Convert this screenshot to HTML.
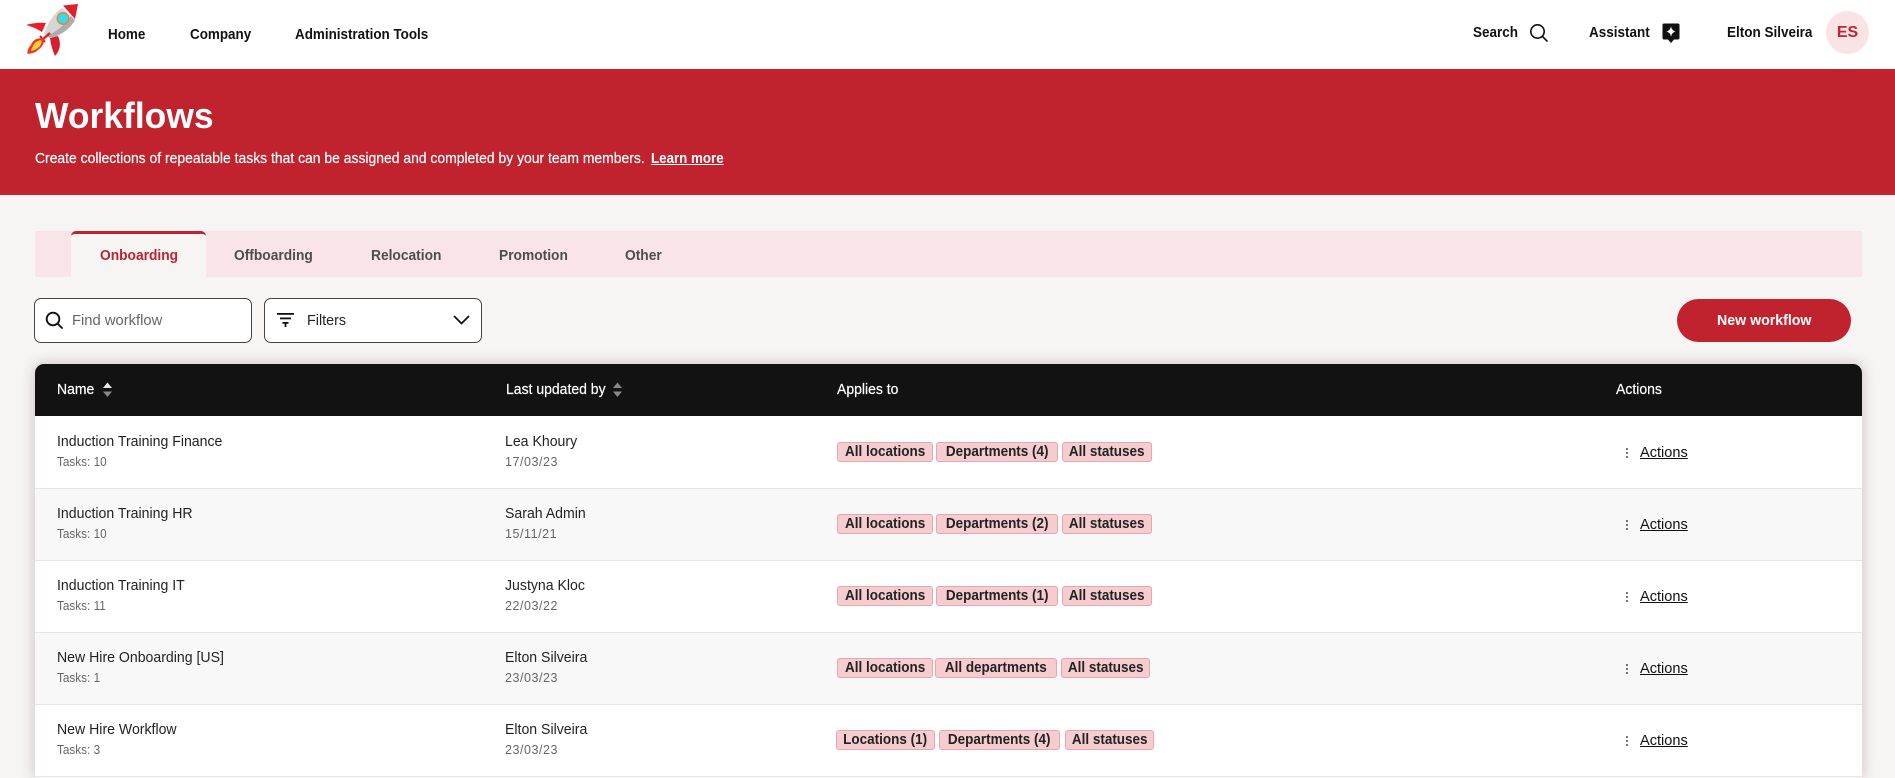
<!DOCTYPE html>
<html lang="en"><head><meta charset="utf-8"><title>Workflows</title>
<style>
*{box-sizing:border-box}
html,body{margin:0;padding:0;width:1895px;height:778px;overflow:hidden}
body{background:#f6f5f4;position:relative;font-family:"Liberation Sans",sans-serif;color:#111}
.a{position:absolute}
.t{position:absolute;white-space:nowrap;transform-origin:0 50%;line-height:20px;height:20px}
.nav{font-size:15px;font-weight:700;top:25px;transform:scaleX(.895);color:#111}
.tab{font-size:14.5px;font-weight:700;top:246px;color:#4d4d4d;transform:scaleX(.95)}
.hd{font-size:14.5px;top:380px;color:#fff;transform:scaleX(.965);-webkit-text-stroke:.2px #fff}
.row{position:absolute;left:35px;width:1827px;height:72px;background:#fff}
.row::after{content:"";position:absolute;left:0;right:0;top:72px;height:1px;background:#e5e5e5;z-index:1}
.row.alt{background:#f8f8f8}
.n{font-size:15px;top:16px;left:22px;color:#222;transform:scaleX(.94)}
.s{font-size:12.5px;top:36px;left:22px;color:#666;transform:scaleX(.94)}
.n.c,.s.c{left:470px}
.s.c{transform:none;letter-spacing:.55px}
.tag{position:absolute;top:26px;height:20px;background:#f5cdd1;border:1px solid #e9a6ab;border-radius:3px;text-align:center;font-size:14.5px;line-height:18px;color:#222;font-weight:700;overflow:hidden}
.tag span{display:inline-block;transform:scaleX(.93);transform-origin:50% 50%;white-space:nowrap;margin:0 -20px}
.act{font-size:15px;top:27px;left:1605px;color:#111;text-decoration:underline;transform:scaleX(.97)}
.dots{position:absolute;left:1591px;top:31px;width:2px;height:12px;background:radial-gradient(circle,#555 .85px,transparent 1.1px) 0 0/2px 4px repeat-y}
</style></head>
<body>
<header class="a" style="left:0;top:0;width:1895px;height:69px;background:#fff">
<svg class="a" style="left:20px;top:0" width="65" height="60" viewBox="20 0 65 60">
<path d="M26 25 Q36 22 46 23 L42 32 Q34 27 26 25Z" fill="#ee1c2a"/>
<path d="M50 38 L58 36 Q63 47 55 56 Q51 47 50 38Z" fill="#d81e2c"/>
<path d="M44 34 C47 24 54 13 62 8 L75 20 C70 29 60 36 50 38 Z" fill="#d6d6d6"/>
<path d="M50 38 C60 36 70 29 75 20 L71 16 C65 25 56 32 46.500 36Z" fill="#adadad"/>
<path d="M63 5.500 L78 4 L75 19 Z" fill="#e01f2d"/>
<path d="M41 41 L50 33" stroke="#d9202c" stroke-width="2.500" fill="none"/>
<path d="M40 36 L45 42" stroke="#c8202c" stroke-width="2" fill="none"/>
<circle cx="63" cy="18.500" r="5.700" fill="#35dbf5" stroke="#d98a32" stroke-width="1.500"/>
<path d="M44 38 C38 38 33 39 31 45 C29 47 27 50 27.500 54 C31 53.500 35 53 38 50 C41 48 45 44 44 38Z" fill="#f03a1f"/>
<path d="M41 40 C37 41 34 43 33 46 C32 48 31 50 31 51 C34 50.500 37 49 39 47 C41 45 42 42 41 40Z" fill="#fdd23b"/>
</svg>
<span class="t nav" style="left:108px">Home</span>
<span class="t nav" style="left:190px">Company</span>
<span class="t nav" style="left:295px">Administration Tools</span>
<span class="t nav" style="left:1473px;top:23px;font-size:14.5px;font-weight:700;transform:scaleX(.93)">Search</span>
<svg class="a" style="left:1529px;top:23px" width="20" height="20" viewBox="0 0 20 20" fill="none" stroke="#111" stroke-width="1.6"><circle cx="8.500" cy="8.500" r="6.700"/><path d="M13.500 13.500 L18 18" stroke-linecap="round"/></svg>
<span class="t nav" style="left:1589px;top:23px;font-size:14.5px;font-weight:700;transform:scaleX(.93)">Assistant</span>
<svg class="a" style="left:1662px;top:23px" width="18" height="21" viewBox="0 0 18 21"><path d="M2 0.500H16Q17.500 0.500 17.500 2V15Q17.500 16.500 16 16.500H12L9 20L6 16.500H2Q0.500 16.500 0.500 15V2Q0.500 0.500 2 0.500Z" fill="#111"/><path d="M9 3.500 Q9.800 7.400 13.500 8.500 Q9.800 9.600 9 13.500 Q8.200 9.600 4.500 8.500 Q8.200 7.400 9 3.500Z" fill="#fff"/></svg>
<span class="t nav" style="left:1727px;top:23px;font-size:14.5px;font-weight:700;transform:scaleX(.93)">Elton Silveira</span>
<div class="a" style="left:1826px;top:11px;width:43px;height:43px;border-radius:50%;background:#f9e3e5;color:#c3232f;text-align:center;line-height:43px;font-size:16px;font-weight:700">ES</div>
</header>

<section class="a" style="left:0;top:69px;width:1895px;height:126px;background:#c1232e;color:#fff">
<h1 class="t" style="margin:0;left:35px;top:26px;height:42px;line-height:42px;font-size:36px;font-weight:700;transform:scaleX(.985)">Workflows</h1>
<span class="t" style="left:35px;top:80px;font-size:14.5px;transform:scaleX(.96);-webkit-text-stroke:.2px #fff">Create collections of repeatable tasks that can be assigned and completed by your team members.</span>
<span class="t" style="left:651px;top:80px;font-size:14.5px;font-weight:700;text-decoration:underline;transform:scaleX(.92)">Learn more</span>
</section>

<div class="a" style="left:35px;top:231px;width:1827px;height:46px;background:#f9e5e7"></div>
<div class="a" style="left:71px;top:231px;width:135px;height:46px;background:#f6f5f4;border-top:3px solid #c1232e;border-radius:5px 5px 0 0"></div>
<span class="t tab" style="left:100px;color:#c1232e">Onboarding</span>
<span class="t tab" style="left:234px">Offboarding</span>
<span class="t tab" style="left:371px">Relocation</span>
<span class="t tab" style="left:499px">Promotion</span>
<span class="t tab" style="left:625px">Other</span>

<div class="a" style="left:34px;top:298px;width:218px;height:45px;background:#fff;border:1px solid #444;border-radius:7px"></div>
<svg class="a" style="left:45px;top:311px" width="19" height="19" viewBox="0 0 19 19" fill="none" stroke="#111" stroke-width="1.9"><circle cx="8" cy="8" r="6.300"/><path d="M12.700 12.700 L17 17" stroke-linecap="round"/></svg>
<span class="t" style="left:72px;top:311px;font-size:15px;color:#666;transform:scaleX(.985)">Find workflow</span>

<div class="a" style="left:264px;top:298px;width:218px;height:45px;background:#fff;border:1px solid #444;border-radius:7px"></div>
<svg class="a" style="left:277px;top:312px" width="18" height="16" viewBox="0 0 18 16" fill="#111"><rect x="0" y="1" width="17" height="1.800"/><rect x="3" y="5.500" width="11" height="1.800"/><rect x="5.500" y="10" width="6" height="1.800"/><rect x="7.600" y="10" width="1.800" height="5"/></svg>
<span class="t" style="left:307px;top:311px;font-size:14.500px;color:#222;transform:scaleX(.99)">Filters</span>
<svg class="a" style="left:452px;top:314px" width="19" height="12" viewBox="0 0 19 12" fill="none" stroke="#111" stroke-width="1.800"><path d="M2 2 L9.500 9.500 L17 2"/></svg>

<div class="a" style="left:1677px;top:299px;width:174px;height:43px;border-radius:22px;background:#c1232e"></div>
<span class="t" style="left:1717px;top:311px;font-size:14.500px;font-weight:700;color:#fff;transform:scaleX(.977)">New workflow</span>

<div class="a" style="left:35px;top:364px;width:1827px;height:414px;background:#f8f8f8;border-radius:9px 9px 0 0;box-shadow:0 0 14px rgba(90,50,55,.28)"></div>
<div class="a" style="left:35px;top:364px;width:1827px;height:52px;background:#121212;border-radius:9px 9px 0 0"></div>
<span class="t hd" style="left:57px">Name</span>
<svg class="a" style="left:102px;top:382px" width="11" height="16" viewBox="0 0 11 16"><path d="M5.500 0.500L10 6H1Z" fill="#e8e8e8"/><path d="M5.500 15L10 9.500H1Z" fill="#888"/></svg>
<span class="t hd" style="left:506px">Last updated by</span>
<svg class="a" style="left:612px;top:382px" width="11" height="16" viewBox="0 0 11 16"><path d="M5.500 0.500L10 6H1Z" fill="#888"/><path d="M5.500 15L10 9.500H1Z" fill="#888"/></svg>
<span class="t hd" style="left:837px">Applies to</span>
<span class="t hd" style="left:1616px">Actions</span>

<div class="row" style="top:416px">
<span class="t n">Induction Training Finance</span><span class="t s">Tasks: 10</span>
<span class="t n c">Lea Khoury</span><span class="t s c">17/03/23</span>
<div class="tag" style="left:802px;width:96px"><span>All locations</span></div><div class="tag" style="left:901px;width:122px"><span>Departments (4)</span></div><div class="tag" style="left:1027px;width:90px"><span>All statuses</span></div>
<i class="dots"></i><span class="t act">Actions</span>
</div>
<div class="row alt" style="top:488px">
<span class="t n">Induction Training HR</span><span class="t s">Tasks: 10</span>
<span class="t n c">Sarah Admin</span><span class="t s c">15/11/21</span>
<div class="tag" style="left:802px;width:96px"><span>All locations</span></div><div class="tag" style="left:901px;width:122px"><span>Departments (2)</span></div><div class="tag" style="left:1027px;width:90px"><span>All statuses</span></div>
<i class="dots"></i><span class="t act">Actions</span>
</div>
<div class="row" style="top:560px">
<span class="t n">Induction Training IT</span><span class="t s">Tasks: 11</span>
<span class="t n c">Justyna Kloc</span><span class="t s c">22/03/22</span>
<div class="tag" style="left:802px;width:96px"><span>All locations</span></div><div class="tag" style="left:901px;width:122px"><span>Departments (1)</span></div><div class="tag" style="left:1027px;width:90px"><span>All statuses</span></div>
<i class="dots"></i><span class="t act">Actions</span>
</div>
<div class="row alt" style="top:632px">
<span class="t n">New Hire Onboarding [US]</span><span class="t s">Tasks: 1</span>
<span class="t n c">Elton Silveira</span><span class="t s c">23/03/23</span>
<div class="tag" style="left:802px;width:96px"><span>All locations</span></div><div class="tag" style="left:900px;width:122px"><span>All departments</span></div><div class="tag" style="left:1026px;width:89px"><span>All statuses</span></div>
<i class="dots"></i><span class="t act">Actions</span>
</div>
<div class="row" style="top:704px">
<span class="t n">New Hire Workflow</span><span class="t s">Tasks: 3</span>
<span class="t n c">Elton Silveira</span><span class="t s c">23/03/23</span>
<div class="tag" style="left:801px;width:99px"><span>Locations (1)</span></div><div class="tag" style="left:904px;width:121px"><span>Departments (4)</span></div><div class="tag" style="left:1030px;width:89px"><span>All statuses</span></div>
<i class="dots"></i><span class="t act">Actions</span>
</div>
</body></html>
